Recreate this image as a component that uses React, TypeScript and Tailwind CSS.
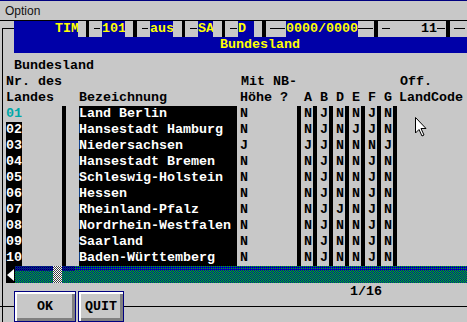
import React from "react";

const GRAY = "bg-[#c8c8c8]";

function Dash({ w, ml }: { w: string; ml: string }) {
  return <div className={`h-px bg-black mt-[7px] ${w} ${ml}`} />;
}

type RowData = { nr: string; name: string; nb: string; flags: string[] };

const rows: RowData[] = [
  { nr: "01", name: "Land Berlin", nb: "N", flags: ["N", "J", "N", "N", "J", "N"] },
  { nr: "02", name: "Hansestadt Hamburg", nb: "N", flags: ["N", "J", "N", "J", "J", "N"] },
  { nr: "03", name: "Niedersachsen", nb: "J", flags: ["J", "J", "N", "N", "N", "J"] },
  { nr: "04", name: "Hansestadt Bremen", nb: "N", flags: ["N", "J", "N", "N", "J", "N"] },
  { nr: "05", name: "Schleswig-Holstein", nb: "N", flags: ["N", "J", "N", "N", "J", "N"] },
  { nr: "06", name: "Hessen", nb: "N", flags: ["N", "J", "N", "N", "J", "N"] },
  { nr: "07", name: "Rheinland-Pfalz", nb: "N", flags: ["N", "J", "J", "N", "J", "N"] },
  { nr: "08", name: "Nordrhein-Westfalen", nb: "N", flags: ["N", "J", "N", "N", "J", "N"] },
  { nr: "09", name: "Saarland", nb: "N", flags: ["N", "J", "N", "N", "J", "N"] },
  { nr: "10", name: "Baden-Württemberg", nb: "N", flags: ["N", "J", "N", "N", "J", "N"] },
];

function DataRow({ r, first }: { r: RowData; first: boolean }) {
  return (
    <div className="flex h-[16px] whitespace-pre">
      <div className="w-[6px]" />
      <div className={first ? "w-[16px] text-[#00a8a8]" : "w-[16px] bg-black text-white"}>{r.nr}</div>
      <div className="w-[40px]" />
      <div className="w-[4px] bg-black" />
      <div className="w-[13px]" />
      <div className="w-[158px] bg-black text-white">{r.name}</div>
      <div className="w-[60px] pl-[3px]">{r.nb}</div>
      {r.flags.map((f, i) => (
        <React.Fragment key={i}>
          <div className="w-[4px] bg-black" />
          <div className="w-[12px] pl-[3px]">{f}</div>
        </React.Fragment>
      ))}
      <div className="w-[4px] bg-black" />
    </div>
  );
}

function Btn({ label, w }: { label: string; w: string }) {
  return (
    <div
      className={`${w} h-[31px] border border-[#000080] ${GRAY} shadow-[inset_2px_2px_0_#ffffff,inset_-3px_-3px_0_#808080] flex items-center justify-center text-black`}
    >
      {label}
    </div>
  );
}

function ScrollTrack() {
  return (
    <svg width="452" height="17" className="block">
      <defs>
        <pattern id="chk" width="2" height="2" patternUnits="userSpaceOnUse">
          <rect width="2" height="2" fill="#0000b0" />
          <rect x="0" y="0" width="1" height="1" fill="#00d000" />
          <rect x="1" y="1" width="1" height="1" fill="#00d000" />
        </pattern>
        <pattern id="sparse" width="2" height="2" patternUnits="userSpaceOnUse">
          <rect width="2" height="2" fill="#0000b0" />
          <rect x="0" y="0" width="1" height="1" fill="#00c000" />
        </pattern>
        <pattern id="dark" width="2" height="2" patternUnits="userSpaceOnUse">
          <rect width="2" height="2" fill="#0000b0" />
          <rect x="0" y="0" width="1" height="1" fill="#004040" />
          <rect x="1" y="1" width="1" height="1" fill="#000050" />
        </pattern>
        <pattern id="thumb" width="2" height="2" patternUnits="userSpaceOnUse">
          <rect width="2" height="2" fill="#ffffff" />
          <rect x="1" y="0" width="1" height="1" fill="#404040" />
          <rect x="0" y="1" width="1" height="1" fill="#404040" />
        </pattern>
      </defs>
      <rect x="0" y="0" width="452" height="17" fill="url(#chk)" />
      <rect x="0" y="0" width="60" height="5" fill="url(#dark)" />
      <rect x="60" y="0" width="392" height="5" fill="url(#sparse)" />
      <rect x="38" y="0" width="9" height="17" fill="url(#thumb)" />
    </svg>
  );
}

export default function App() {
  return (
    <div
      className={`relative w-[467px] h-[322px] overflow-hidden ${GRAY} text-black font-['Liberation_Mono',monospace] text-[13.33px] font-bold leading-[16px]`}
    >
      {/* menu bar */}
      <div className="h-[21px] border-t border-[#000080] border-b border-b-black flex items-center pl-[5px] font-['Liberation_Sans',sans-serif] font-normal text-[12px] text-[#111]">
        Option
      </div>

      <div className="relative">
        {/* frame line */}
        <div className="absolute left-[2px] top-[7px] right-0 bottom-0 border-l border-t border-black pointer-events-none" />

        {/* blue title band */}
        <div className="relative ml-[14px] bg-[#0000a8] text-[#ffff00]">
          <div className="flex h-[16px] whitespace-pre">
            <div className="w-[41px]" />
            <div className="w-[23px]">TIM</div>
            <div className={`w-[8px] ${GRAY}`} />
            <div className="w-[3px] bg-black" />
            <div className={`w-[13px] ${GRAY}`}><Dash w="w-[6px]" ml="ml-[5px]" /></div>
            <div className="w-[23px]">101</div>
            <div className={`w-[8px] ${GRAY}`} />
            <div className="w-[4px] bg-black" />
            <div className={`w-[13px] ${GRAY}`}><Dash w="w-[6px]" ml="ml-[5px]" /></div>
            <div className="w-[23px]">aus</div>
            <div className={`w-[9px] ${GRAY}`} />
            <div className="w-[3px] bg-black" />
            <div className={`w-[13px] ${GRAY}`}><Dash w="w-[7px]" ml="ml-[5px]" /></div>
            <div className="w-[15px]">SA</div>
            <div className={`w-[9px] ${GRAY}`} />
            <div className="w-[3px] bg-black" />
            <div className={`w-[13px] ${GRAY}`}><Dash w="w-[7px]" ml="ml-[5px]" /></div>
            <div className="w-[16px]">D</div>
            <div className={`w-[8px] ${GRAY}`} />
            <div className="w-[4px] bg-black" />
            <div className={`w-[20px] ${GRAY}`}><Dash w="w-[15px]" ml="ml-[4px]" /></div>
            <div className="w-[72px]">0000/0000</div>
            <div className={`w-[16px] ${GRAY}`}><Dash w="w-[15px]" ml="ml-0" /></div>
            <div className="w-[4px] bg-black" />
            <div className={`w-[68px] ${GRAY} flex text-black`}>
              <Dash w="w-[8px]" ml="ml-[4px]" />
              <div className="ml-[31px] w-[16px]">11</div>
              <Dash w="w-[8px]" ml="ml-0" />
            </div>
            <div className="w-[4px] bg-black" />
            <div className={`flex-1 ${GRAY}`}><Dash w="w-[11px]" ml="ml-[4px]" /></div>
          </div>
          <div className="h-[16px] pl-[206px]">Bundesland</div>
        </div>

        <div className="h-[5px]" />
        <div className="h-[16px] pl-[14px]">Bundesland</div>

        {/* headers */}
        <div className="flex h-[16px] whitespace-pre">
          <div className="w-[6px]" />
          <div className="w-[235px]">Nr. des</div>
          <div className="w-[159px]">Mit NB-</div>
          <div>Off.</div>
        </div>
        <div className="flex h-[16px] whitespace-pre">
          <div className="w-[6px]" />
          <div className="w-[73px]">Landes</div>
          <div className="w-[161px]">Bezeichnung</div>
          <div className="w-[64px]">Höhe ?</div>
          {["A", "B", "D", "E", "F", "G"].map((l) => (
            <div key={l} className="w-[16px]">{l}</div>
          ))}
          <div className="ml-[-1px]">LandCode</div>
        </div>

        {rows.map((r, i) => (
          <DataRow key={r.nr} r={r} first={i === 0} />
        ))}

        {/* scrollbar */}
        <div className="flex h-[17px]">
          <div className="w-[6px]" />
          <div className="w-[9px] bg-black flex items-center">
            <svg width="8" height="12" viewBox="0 0 8 12" className="ml-[1px]">
              <polygon points="7,0 7,12 0,6" fill="#ffffff" />
            </svg>
          </div>
          <div className="flex-1 overflow-hidden">
            <ScrollTrack />
          </div>
        </div>

        {/* bottom */}
        <div className="flex h-[39px]">
          <div className="w-[14px] pt-[23px]">
            <div className="h-px bg-black" />
          </div>
          <div className="flex gap-[2px] pt-[8px]">
            <Btn label="OK" w="w-[62px]" />
            <Btn label="QUIT" w="w-[46px]" />
          </div>
          <div className="flex-1 flex flex-col">
            <div className="h-[23px] pl-[226px] pt-[1px]">1/16</div>
            <div className="h-px bg-black" />
          </div>
        </div>

        {/* mouse cursor */}
        <svg
          width="12"
          height="20"
          viewBox="0 0 12 20"
          className="absolute left-[415px] top-[96px] pointer-events-none"
        >
          <path d="M0.5 0.5 L0.5 16 L4 12.5 L7 19 L9 18 L6 11.5 L11 11.5 Z" fill="#ffffff" stroke="#000000" strokeWidth="1" />
        </svg>
      </div>
    </div>
  );
}
